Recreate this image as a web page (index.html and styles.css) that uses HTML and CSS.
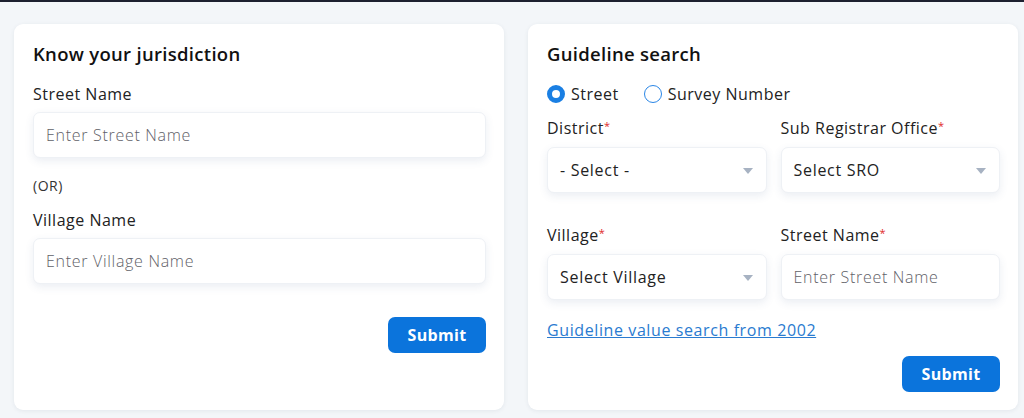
FILE: index.html
```html
<!DOCTYPE html>
<html lang="en">

<head>
    <meta charset="UTF-8">
    <meta name="viewport" content="width=device-width, initial-scale=1.0">
    <title>Jurisdiction &amp; Guideline search</title>
    <link rel="stylesheet" href="styles.css">
</head>

<body>

    <div class="page">
        <!-- left card -->
        <form class="card" action="#">
            <h3 class="card-title">Know your jurisdiction</h3>
            <label class="field-label" for="street">Street Name</label>
            <input class="text-input" type="text" id="street" placeholder="Enter Street Name">
            <p class="or">(OR)</p>
            <label class="field-label village-label" for="village">Village Name</label>
            <input class="text-input" type="text" id="village" placeholder="Enter Village Name">
            <div class="actions">
                <button class="btn" type="button">Submit</button>
            </div>
        </form>

        <!-- right card -->
        <form class="card" action="#">
            <h3 class="card-title">Guideline search</h3>
            <div class="radios">
                <label class="radio"><span class="dot checked"></span>Street</label>
                <label class="radio"><span class="dot"></span>Survey Number</label>
            </div>
            <div class="grid">
                <div class="cell">
                    <span class="field-label">District<sup class="req">*</sup></span>
                    <div class="select">- Select -<span class="caret"></span></div>
                </div>
                <div class="cell">
                    <span class="field-label">Sub Registrar Office<sup class="req">*</sup></span>
                    <div class="select">Select SRO<span class="caret"></span></div>
                </div>
                <div class="cell">
                    <span class="field-label">Village<sup class="req">*</sup></span>
                    <div class="select">Select Village<span class="caret"></span></div>
                </div>
                <div class="cell">
                    <span class="field-label">Street Name<sup class="req">*</sup></span>
                    <input class="text-input small" type="text" placeholder="Enter Street Name">
                </div>
            </div>
            <a class="link" href="#">Guideline value search from 2002</a>
            <div class="actions right-actions">
                <button class="btn" type="button">Submit</button>
            </div>
        </form>
    </div>

</body>

</html>
```

FILE: styles.css
```css
* {
    box-sizing: border-box;
}

body {
    margin: 0;
    height: 418px;
    overflow: hidden;
    background: #f3f6f9;
    border-top: 2px solid #1d2030;
    font-family: "Open Sans", "Liberation Sans", sans-serif;
    color: #1f1f24;
}

.page {
    display: flex;
    gap: 24px;
    padding: 22px 6px 0 14px;
}

.card {
    flex: 1;
    height: 386px;
    margin: 0;
    padding: 18px 18px 0 19px;
    background: #fff;
    border-radius: 9px;
    box-shadow: 0 1px 4px rgba(40, 60, 90, 0.08);
    display: flex;
    flex-direction: column;
}

.card-title {
    margin: 0;
    font-size: 18.5px;
    line-height: 24px;
    font-weight: 600;
    letter-spacing: 0.3px;
    color: #111;
}

.field-label {
    display: block;
    font-size: 16px;
    line-height: 22px;
    letter-spacing: 0.5px;
    color: #222;
}

.card > .field-label {
    margin-top: 17px;
}

.card > .village-label {
    margin-top: 13px;
}

.text-input {
    display: block;
    width: 100%;
    height: 46px;
    margin-top: 7px;
    padding: 0 12px;
    border: 1px solid #eef1f5;
    border-radius: 7px;
    background: #fff;
    box-shadow: 0 3px 8px rgba(60, 90, 140, 0.1);
    font-family: inherit;
    font-size: 16px;
    letter-spacing: 0.7px;
    color: #333;
    outline: none;
}

.text-input::placeholder {
    color: #5f6168;
    font-weight: 300;
}

.or {
    margin: 18px 0 0;
    font-size: 14px;
    line-height: 20px;
    letter-spacing: 0.5px;
    color: #333;
}

.actions {
    display: flex;
    justify-content: flex-end;
    margin-top: 33px;
}

.right-actions {
    margin-top: 15px;
}

.btn {
    width: 98px;
    height: 36px;
    border: none;
    border-radius: 7px;
    background: #0b74dc;
    color: #fff;
    font-family: inherit;
    font-size: 16px;
    font-weight: 700;
    letter-spacing: 0.3px;
}

.radios {
    display: flex;
    gap: 25px;
    margin-top: 17px;
    height: 22px;
    align-items: center;
}

.radio {
    display: flex;
    align-items: center;
    gap: 6px;
    font-size: 16px;
    letter-spacing: 0.5px;
    color: #222;
}

.dot {
    width: 18px;
    height: 18px;
    border-radius: 50%;
    border: 1.5px solid #2a86e6;
}

.dot.checked {
    border: 5px solid #1a7fe3;
}

.grid {
    display: grid;
    grid-template-columns: 1fr 1fr;
    column-gap: 14px;
    row-gap: 31px;
    margin-top: 12px;
}

.select {
    position: relative;
    height: 46px;
    margin-top: 8px;
    padding: 0 12px;
    display: flex;
    align-items: center;
    border: 1px solid #eef1f5;
    border-radius: 7px;
    background: #fff;
    box-shadow: 0 3px 8px rgba(60, 90, 140, 0.1);
    font-size: 16px;
    letter-spacing: 0.7px;
    color: #222;
}

.caret {
    position: absolute;
    right: 13px;
    top: 20px;
    border-left: 5px solid transparent;
    border-right: 5px solid transparent;
    border-top: 6px solid #a7b2c2;
}

.text-input.small {
    margin-top: 8px;
}

.req {
    color: #e02a2a;
    font-size: 11px;
    vertical-align: 4px;
    line-height: 0;
    letter-spacing: 0;
}

.link {
    margin-top: 19px;
    font-size: 16px;
    line-height: 22px;
    letter-spacing: 0.6px;
    color: #2a7bd0;
    align-self: flex-start;
}
```
